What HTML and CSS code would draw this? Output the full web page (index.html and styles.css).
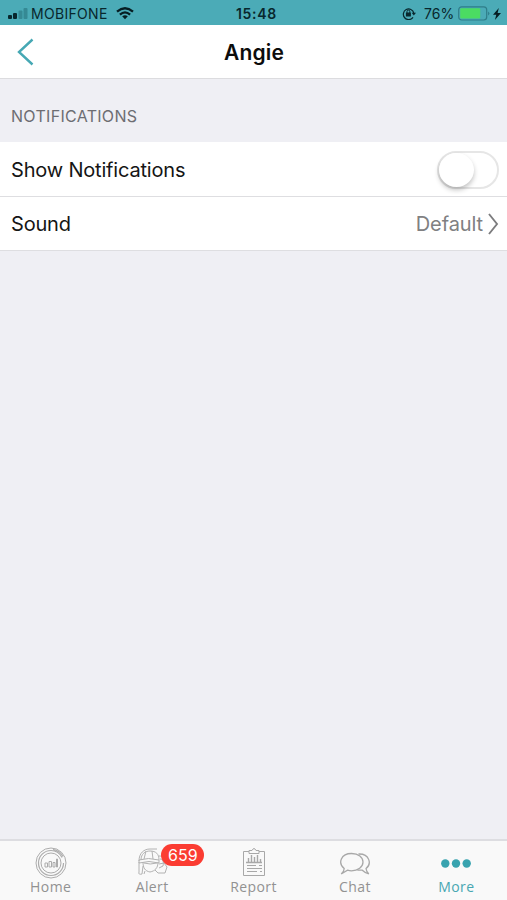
FILE: index.html
```html
<!DOCTYPE html>
<html lang="en">
<head>
<meta charset="utf-8">
<title>Angie</title>
<link rel="stylesheet" href="styles.css">
</head>
<body>
<div class="screen">
  <header class="status">
    <div class="status-left">
      <svg width="20" height="13" viewBox="0 0 20 13"><rect x="0" y="8" width="4" height="4" rx="1" fill="#08272d"/><rect x="5" y="6" width="4" height="6" rx="1" fill="#08272d"/><rect x="10.500" y="3.500" width="4" height="8.500" rx="1" fill="#358994"/><rect x="15.500" y="1" width="4" height="11" rx="1" fill="#358994"/></svg>
      <span class="carrier">MOBIFONE</span>
      <svg class="wifi" width="18" height="13" viewBox="0 0 18 13" fill="none" stroke="#061d22" stroke-width="2.300"><path d="M1 4.700Q9-2.100 17 4.700M3.900 7.600Q9 3.200 14.100 7.600"/><path d="M6.200 9.300Q9 7.200 11.800 9.300L9 12.200Z" fill="#061d22" stroke="none"/></svg>
    </div>
    <span class="time">15:48</span>
    <div class="status-right">
      <svg width="14" height="13" viewBox="0 0 14 13"><path d="M11 10.300A5.300 5.300 0 1 1 11.800 6" fill="none" stroke="#08272d" stroke-width="1.200"/><path d="M9.700 5.700h4.300l-2.200 2.900z" fill="#08272d"/><rect x="3.900" y="5.600" width="5" height="3.800" rx=".5" fill="#08272d"/><path d="M5 6V4.500a1.400 1.400 0 0 1 2.800 0V6" fill="none" stroke="#08272d"/></svg>
      <span class="percent">76%</span>
      <svg class="battery" width="32" height="15" viewBox="0 0 32 15"><rect x=".7" y=".8" width="28" height="13.200" rx="3" fill="none" stroke="#2f7d89" stroke-width="1.200"/><rect x="2.200" y="2.300" width="20" height="10.200" rx="1" fill="#4bdc62"/><path d="M30.300 5.500q2 2 0 4z" fill="#246f7b"/></svg>
      <svg class="bolt" width="8" height="12" viewBox="0 0 8 12"><path d="M5.800 0L0 6.800h3.300L1.900 12 8 5H4.600z" fill="#061d22"/></svg>
    </div>
  </header>
  <nav class="navbar">
    <svg class="back" width="18" height="28" viewBox="0 0 18 28"><path d="M15.500 1.500L2 14l13.500 12.500" fill="none" stroke="#46a8b4" stroke-width="2.400"/></svg>
    <h1 class="title">Angie</h1>
  </nav>
  <main class="content">
    <h2 class="section">NOTIFICATIONS</h2>
    <div class="row"><span class="label">Show Notifications</span><span class="switch"><span class="knob"></span></span></div>
    <div class="row row-sound"><span class="label">Sound</span><span class="value">Default</span>
      <svg class="chevron" width="12" height="24" viewBox="0 0 12 24"><path d="M2 2l8 10-8 10" fill="none" stroke="#7c7c7e" stroke-width="1.900"/></svg>
    </div>
  </main>
  <footer class="tabs">
    <div class="tab">
      <svg width="32" height="32" viewBox="0 0 32 32" fill="none" stroke="#acacac"><circle cx="16" cy="16" r="15"/><path d="M16 3.500A12.500 12.500 0 1 0 28.500 16M16 3.500c5 0 9 3 11 7M18 2.500c5 .5 8 3 10 7" stroke-width="1.200"/><circle cx="16" cy="16" r="10"/><path d="M10 20v-4h2.500v4zM14 20v-5.500h2.500V20zM18 20v-4.500h2V20zM21.500 20v-8h1v8z"/></svg>
      <span>Home</span>
    </div>
    <div class="tab">
      <svg width="32" height="32" viewBox="0 0 32 32" fill="none" stroke="#b2b2b2"><path d="M3 14C3 6 8 2 14 2h7M5 13c0-6 4-9 9-9 6 0 9 3 9 9M3 13q9-3 20 0v3q-10-3-20 0zM10 4l-2 8M16 4l1 8M7 15c0 6 2 9 7 10 5-1 8-4 8-10M3 15v10q-1 3 3 2l1-8M8 16q6 2 13 0M9 24l-1 3M19 23l3 3h7l2-6-3-4-5 1M23 9c4 0 6 2 7 6M24 12c3 0 4 3 3 7l-4 2"/></svg>
      <span>Alert</span>
      <b class="badge">659</b>
    </div>
    <div class="tab">
      <svg width="32" height="32" viewBox="0 0 32 32" fill="none" stroke="#a8a8a8"><path d="M11 4.500H5.500v24h21v-24H21M11 6.500v-3h3q2-4 4 0h3v3z"/><path d="M8 15.500h16M10.500 15v-4M13.500 15V8M16.500 15v-5M19.500 15V8M22.500 15v-3" stroke-width="1.400"/><path d="M9 18.500h9M9 21.500h15M9 24.500h10M21 18.500h3M22 24.500h2"/></svg>
      <span>Report</span>
    </div>
    <div class="tab">
      <svg width="32" height="32" viewBox="0 0 32 32" fill="none" stroke="#a8a8a8" stroke-width="1.300"><path d="M5.200 21.500C-1.500 16 2 6.500 12.500 6.500c7 0 11.500 3.600 11.500 8.600s-5 8.700-11.500 8.700q-2 0-4-.6L2.200 27q3-2.500 3-5.500z"/><path d="M19.500 7C30.500 6.500 33 17 27 21.500q.3 3 2.800 5.500-4-1.400-6.500-3.800h-5"/></svg>
      <span>Chat</span>
    </div>
    <div class="tab active">
      <svg width="32" height="32" viewBox="0 0 32 32" fill="#38a3af"><circle cx="5.300" cy="16.500" r="4.200"/><circle cx="16" cy="16.500" r="4.200"/><circle cx="26.700" cy="16.500" r="4.200"/></svg>
      <span>More</span>
    </div>
  </footer>
</div>
</body>
</html>
```
FILE: styles.css
```css
* { box-sizing: border-box; }
body { margin: 0; font-family: Inter, "Liberation Sans", sans-serif; }
svg { display: block; flex: none; }
.screen { width: 507px; height: 900px; display: flex; flex-direction: column; background: #efeff4; overflow: hidden; }
.status { height: 25px; flex: none; background: #4babb7; color: #08272d; display: grid; grid-template-columns: 1fr auto 1fr; align-items: center; padding: 2px 6px 0 8px; font-size: 14px; line-height: 20px; }
.status-left, .status-right { display: flex; align-items: center; }
.status-right { justify-content: flex-end; }
.carrier { margin-left: 3px; width: 78px; white-space: nowrap; letter-spacing: .3px; }
.wifi { margin-left: 7px; }
.time { font-weight: 600; font-size: 14px; letter-spacing: .7px; padding-left: 4px; }
.percent { margin-left: 8px; width: 30px; font-size: 14px; white-space: nowrap; }
.battery { margin-left: 4px; }
.bolt { margin-left: 3px; }
.navbar { height: 54px; flex: none; background: #fff; border-bottom: 1px solid #dcdcdf; display: grid; grid-template-columns: 1fr auto 1fr; align-items: center; }
.back { margin-left: 17px; }
.title { margin: 0; padding: 2px 0 0 1px; font-size: 21px; font-weight: 600; line-height: 26px; letter-spacing: .2px; color: #0c0c0c; }
.content { flex: 1; }
.section { margin: 0; height: 63px; padding: 26px 11px 0; font-size: 16px; line-height: 22px; font-weight: 400; letter-spacing: .3px; color: #6d6d72; }
.row { height: 55px; background: #fff; display: flex; align-items: center; padding: 1px 8px 0 11px; border-bottom: 1px solid #dedee1; }
.row-sound { height: 54px; padding-top: 0; }
.label { flex: 1; font-size: 20px; letter-spacing: -.18px; color: #151515; }
.value { font-size: 20px; letter-spacing: -.1px; color: #808082; }
.chevron { margin-left: 4px; }
.switch { width: 62px; height: 38px; border: 2px solid #e6e6e6; border-radius: 19px; background: #fff; }
.knob { display: block; width: 35px; height: 34px; border-radius: 50%; background: #fff; box-shadow: 0 3px 5px rgba(0,0,0,.24); }
.tabs { height: 61px; flex: none; background: #f9f9f9; border-top: 2px solid #dddde1; display: flex; }
.tab { flex: 1; position: relative; display: flex; flex-direction: column; align-items: center; padding-top: 6px; font-family: "Open Sans", "Noto Sans", sans-serif; font-size: 14px; line-height: 16px; letter-spacing: .4px; color: #929292; }
.active { color: #48a7b2; }
.badge { position: absolute; left: 60px; top: 3px; width: 43px; height: 22px; border-radius: 11px; background: #fb3c32; color: #fff; font: 400 16px/22px Inter, sans-serif; letter-spacing: 0; text-align: center; }
```
